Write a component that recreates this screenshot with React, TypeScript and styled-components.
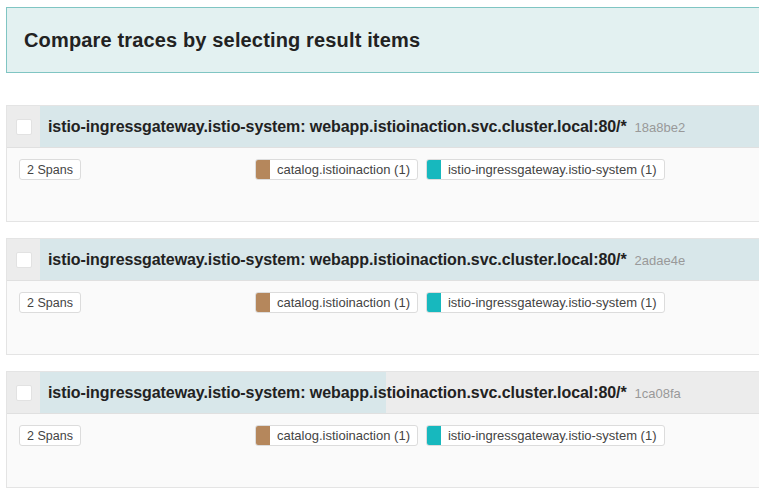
import React from "react";
import styled, { createGlobalStyle } from "styled-components";

const Global = createGlobalStyle`
  html, body { margin: 0; padding: 0; background: #fff; overflow: hidden; }
  body { font-family: "Liberation Sans", Arial, sans-serif; color: #222; }
`;

const Page = styled.div`
  width: 820px;
  padding: 7px 0 0 6px;
  display: flex;
  flex-direction: column;
`;

const Banner = styled.div`
  box-sizing: border-box;
  height: 66px;
  border: 1px solid #80c5c3;
  background: #e3f1f1;
  display: flex;
  align-items: center;
  padding-left: 17px;
  font-size: 20px;
  font-weight: 700;
  letter-spacing: 0.15px;
  color: #222;
  margin-bottom: 32px;
`;

const List = styled.div`
  display: flex;
  flex-direction: column;
  gap: 16px;
`;

const Card = styled.div<{ $last?: boolean }>`
  box-sizing: border-box;
  height: ${(p) => (p.$last ? 117 : 117)}px;
  border: 1px solid #e4e4e4;
  display: flex;
  flex-direction: column;
  background: #fafafa;
`;

const Header = styled.div`
  position: relative;
  height: 41px;
  display: flex;
  align-items: center;
  background: #ececec;
  border-bottom: 1px solid #e0e0e0;
`;

const DurationBar = styled.div`
  position: absolute;
  left: 33px;
  top: 0;
  bottom: 0;
  background: #d8e7ea;
`;

const CheckCell = styled.div`
  position: relative;
  width: 33px;
  height: 100%;
  display: flex;
  align-items: center;
  justify-content: center;
  flex: none;
`;

const Check = styled.span`
  box-sizing: border-box;
  width: 16px;
  height: 16px;
  background: #fff;
  border: 1px solid #e2e2e2;
  border-radius: 2px;
`;

const Title = styled.div`
  position: relative;
  padding-left: 8px;
  font-size: 16px;
  font-weight: 700;
  color: #222;
  white-space: nowrap;
  display: flex;
  align-items: baseline;
  letter-spacing: -0.08px;
`;

const TraceId = styled.span`
  font-size: 13px;
  font-weight: 400;
  color: #999;
  margin-left: 8px;
  letter-spacing: 0;
`;

const Body = styled.div`
  display: flex;
  align-items: flex-start;
  padding: 11px 0 0 12px;
`;

const Badge = styled.span`
  box-sizing: border-box;
  height: 21px;
  width: 62px;
  border: 1px solid #dcdcdc;
  border-radius: 3px;
  background: #fff;
  font-size: 12.5px;
  color: #444;
  display: flex;
  align-items: center;
  justify-content: center;
`;

const Tags = styled.div`
  display: flex;
  gap: 8px;
  margin-left: 174px;
`;

const Tag = styled.span`
  box-sizing: border-box;
  height: 21px;
  display: flex;
  align-items: center;
  border: 1px solid #dcdcdc;
  border-radius: 3px;
  background: #fff;
  font-size: 13px;
  color: #444;
  overflow: hidden;
`;

const Swatch = styled.span<{ $color: string }>`
  width: 15px;
  align-self: stretch;
  background: ${(p) => p.$color};
  margin: -1px 0 -1px -1px;
  border-radius: 3px 0 0 3px;
`;

const TagText = styled.span`
  padding: 0 7px 0 7px;
`;

const traces = [
  { id: "18a8be2", width: 800 },
  { id: "2adae4e", width: 800 },
  { id: "1ca08fa", width: 346 },
];

export default function App() {
  return (
    <>
      <Global />
      <Page>
        <Banner>Compare traces by selecting result items</Banner>
        <List>
          {traces.map((t) => (
            <Card key={t.id}>
              <Header>
                <DurationBar style={{ width: t.width }} />
                <CheckCell>
                  <Check />
                </CheckCell>
                <Title>
                  istio-ingressgateway.istio-system: webapp.istioinaction.svc.cluster.local:80/*
                  <TraceId>{t.id}</TraceId>
                </Title>
              </Header>
              <Body>
                <Badge>2 Spans</Badge>
                <Tags>
                  <Tag>
                    <Swatch $color="#b5875c" />
                    <TagText>catalog.istioinaction (1)</TagText>
                  </Tag>
                  <Tag>
                    <Swatch $color="#17b8be" />
                    <TagText>istio-ingressgateway.istio-system (1)</TagText>
                  </Tag>
                </Tags>
              </Body>
            </Card>
          ))}
        </List>
      </Page>
    </>
  );
}
